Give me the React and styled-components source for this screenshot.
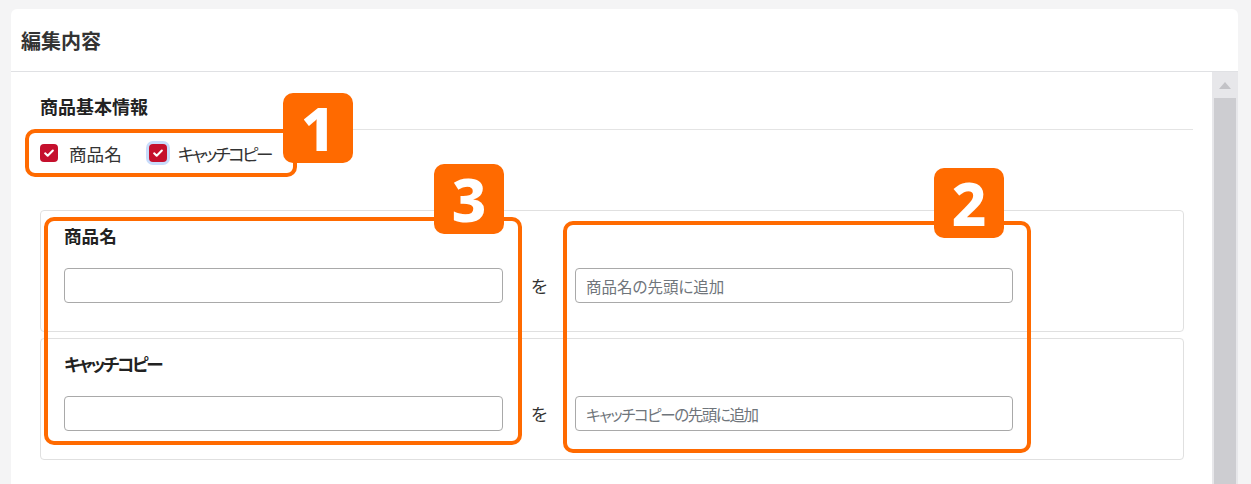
import React from 'react';
import styled, { createGlobalStyle } from 'styled-components';

const GlobalStyle = createGlobalStyle`
  html, body {
    margin: 0;
    padding: 0;
    background: #f4f4f5;
    overflow: hidden;
  }
  body {
    font-family: "Noto Sans CJK JP", "Noto Sans", sans-serif;
    font-feature-settings: "palt" 1;
    color: #222;
  }
`;

const ORANGE = '#ff6a00';

const Page = styled.div`
  position: relative;
  box-sizing: border-box;
  height: 484px;
  padding: 9px 13px 0 11px;
`;

const Card = styled.div`
  background: #fff;
  border-radius: 6px 6px 0 0;
  height: 100%;
  display: flex;
  flex-direction: column;
  overflow: hidden;
`;

const CardHeader = styled.div`
  height: 62px;
  flex-shrink: 0;
  display: flex;
  align-items: center;
  padding: 0 10px;
  border-bottom: 1px solid #e0e1e4;
  font-size: 20px;
  font-weight: 700;
  color: #333;
`;

const CardBody = styled.div`
  flex: 1;
  display: flex;
  min-height: 0;
`;

const Content = styled.div`
  flex: 1;
  padding: 21px 19px 0 29px;
`;

const SectionTitle = styled.div`
  font-size: 18px;
  font-weight: 700;
  line-height: 27px;
  padding-bottom: 9px;
  border-bottom: 1px solid #e4e4e4;
  color: #222;
`;

const CheckRow = styled.div`
  display: flex;
  align-items: center;
  margin-top: 12px;
  height: 22px;
`;

const CheckItem = styled.label`
  display: flex;
  align-items: center;
  gap: 11px;
  margin-right: 27px;
  font-size: 17.6px;
  color: #333;
`;

const Kana = styled.span`
  letter-spacing: ${(p) => p.$ls}px;
`;

const Box = styled.span`
  width: 18px;
  height: 18px;
  border-radius: 4px;
  background: #c5102d;
  display: flex;
  align-items: center;
  justify-content: center;
  box-shadow: ${(p) => (p.$focus ? '0 0 0 3px #c8dcfb' : 'none')};
`;

const Panels = styled.div`
  margin-top: 46px;
  margin-right: 9px;
  display: flex;
  flex-direction: column;
  gap: 6px;
`;

const Panel = styled.div`
  border: 1px solid #e0e0e0;
  border-radius: 4px;
  padding: 12px 24px 28px 23px;
`;

const FieldLabel = styled.div`
  font-size: 17.6px;
  font-weight: 700;
  line-height: 26px;
  margin-bottom: 19px;
  color: #222;
`;

const FieldRow = styled.div`
  display: flex;
  align-items: center;
`;

const Input = styled.input`
  box-sizing: border-box;
  width: ${(p) => p.$w}px;
  height: 35px;
  border: 1px solid #a9a9a9;
  border-radius: 4px;
  padding: 0 10px;
  font-family: inherit;
  font-feature-settings: "palt" 1;
  font-size: 15.5px;
  color: #222;
  background: #fff;
  &::placeholder {
    color: #6f757b;
    letter-spacing: ${(p) => p.$ls || 0}px;
  }
`;

const Joiner = styled.span`
  width: 72px;
  text-align: center;
  font-size: 17.6px;
  color: #333;
`;

const Scrollbar = styled.div`
  width: 26px;
  background: #e7e7ea;
  display: flex;
  flex-direction: column;
`;

const ScrollArrow = styled.div`
  height: 26px;
  display: flex;
  align-items: center;
  justify-content: center;
  &::before {
    content: '';
    border-left: 6px solid transparent;
    border-right: 6px solid transparent;
    border-bottom: 7px solid #c3c3c7;
  }
`;

const Thumb = styled.div`
  flex: 1;
  margin: 0 2px;
  background: #cdcdd1;
`;

const Frame = styled.div`
  position: absolute;
  box-sizing: border-box;
  left: ${(p) => p.$x}px;
  top: ${(p) => p.$y}px;
  width: ${(p) => p.$w}px;
  height: ${(p) => p.$h}px;
  border: 4px solid ${ORANGE};
  border-radius: 10px;
  pointer-events: none;
`;

const Badge = styled.div`
  position: absolute;
  left: ${(p) => p.$x}px;
  top: ${(p) => p.$y}px;
  width: 70px;
  height: 70px;
  border-radius: 10px;
  background: ${ORANGE};
  color: #fff;
  display: flex;
  align-items: center;
  justify-content: center;
  font-family: "Noto Sans", "DejaVu Sans", sans-serif;
  font-weight: 800;
  font-size: 60px;
  line-height: 1;
`;

const Check = () => (
  <svg width="14" height="14" viewBox="0 0 20 20" fill="none">
    <path d="M4.5 10.5l3.6 3.4L15.5 6.5" stroke="#fff" strokeWidth="3" strokeLinecap="round" strokeLinejoin="round" />
  </svg>
);

const fields = [
  { key: 'name', label: '商品名', placeholder: '商品名の先頭に追加', ls: 0 },
  { key: 'catch', label: <Kana $ls={-2.3}>キャッチコピー</Kana>, placeholder: 'キャッチコピーの先頭に追加', ls: -1.4 },
];

export default function App() {
  return (
    <Page>
      <GlobalStyle />
      <Card>
        <CardHeader>編集内容</CardHeader>
        <CardBody>
          <Content>
            <SectionTitle>商品基本情報</SectionTitle>
            <CheckRow>
              <CheckItem>
                <Box><Check /></Box>
                商品名
              </CheckItem>
              <CheckItem>
                <Box $focus><Check /></Box>
                <Kana $ls={-2.6}>キャッチコピー</Kana>
              </CheckItem>
            </CheckRow>
            <Panels>
              {fields.map((f) => (
                <Panel key={f.key}>
                  <FieldLabel>{f.label}</FieldLabel>
                  <FieldRow>
                    <Input $w={439} />
                    <Joiner>を</Joiner>
                    <Input $w={438} $ls={f.ls} placeholder={f.placeholder} />
                  </FieldRow>
                </Panel>
              ))}
            </Panels>
          </Content>
          <Scrollbar>
            <ScrollArrow />
            <Thumb />
          </Scrollbar>
        </CardBody>
      </Card>

      <Frame $x={25} $y={129} $w={272} $h={48} />
      <Badge $x={283} $y={93}>1</Badge>
      <Frame $x={44} $y={217} $w={478} $h={228} />
      <Badge $x={434} $y={164}>3</Badge>
      <Frame $x={563} $y={221} $w={468} $h={232} />
      <Badge $x={934} $y={168}>2</Badge>
    </Page>
  );
}
